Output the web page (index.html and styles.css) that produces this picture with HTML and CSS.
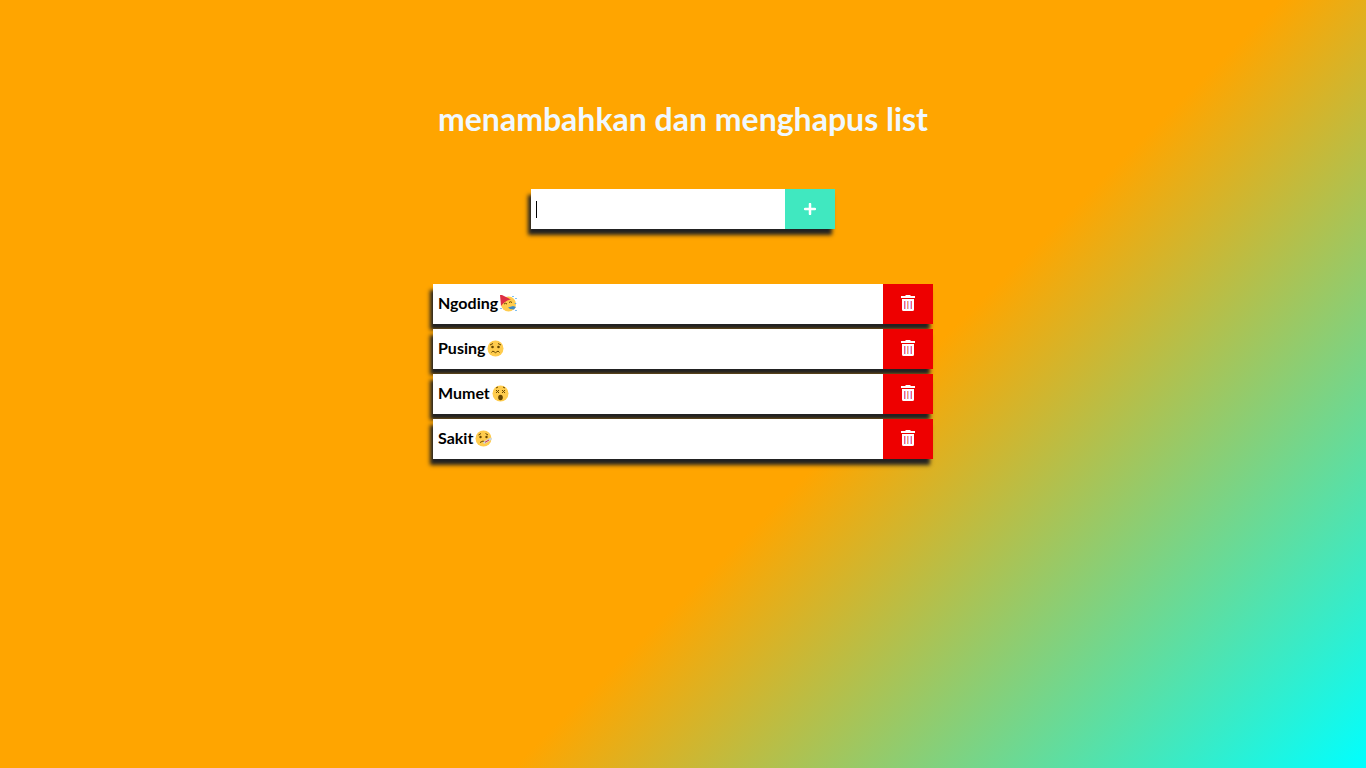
FILE: index.html
```
<!DOCTYPE html>
<html lang="id">
<head>
<meta charset="utf-8">
<meta name="viewport" content="width=device-width, initial-scale=1">
<title>menambahkan dan menghapus list</title>
<link rel="stylesheet" href="styles.css">
</head>
<body>
<svg class="sprite" aria-hidden="true">
  <symbol id="trash" viewBox="0 0 14 16">
    <path fill="#fff" d="M4 1 5 0h4l1 1h4v2H0V1zM1 4h12v10.500a1.500 1.500 0 0 1-1.500 1.500h-9A1.500 1.500 0 0 1 1 14.500z"/>
    <path fill="#f4607c" d="M3 6h1v8H3zM10 6h1v8h-1z"/>
    <path fill="#f8a060" d="M6 6h1v8H6z"/>
    <path fill="#c070e0" d="M7 6h1v8H7zM4 6h1v8H4zM9 6h1v8H9z" opacity=".5"/>
  </symbol>
</svg>
<main class="app">
  <h1 class="title">menambahkan dan menghapus list</h1>
  <form class="entry">
    <input class="entry-input" type="text" aria-label="Tambah list" autocomplete="off" autofocus>
    <button class="button add" type="button" aria-label="Tambah">
      <svg width="12" height="12" viewBox="0 0 12 12"><path d="M6 1v10M1 6h10" stroke="#fff" stroke-width="2.500" stroke-linecap="round"/></svg>
    </button>
  </form>
  <ul class="list">
    <li class="item">
      <span class="label">Ngoding
        <svg class="emoji" viewBox="0 0 17 17" role="img" aria-label="🥳">
          <circle cx="8.500" cy="9" r="7.500" fill="#ffcc4d"/>
          <path d="M0 0h2l9 4.500Q5 5.500 1 11z" fill="#dd2e44"/>
          <path d="M4 9q1.500-1.500 3 0M9 7.500q1.500-1.500 3 0" fill="none" stroke="#664500"/>
          <path d="m8 12.500 5-1.500 3 1-2 2.500-4-.500z" fill="#4289c1"/>
          <path d="M13 1v1M16 3v1M15.500 8v1M1 13v1M16 15v1" stroke="#55acee" stroke-width="1.500"/>
        </svg>
      </span>
      <button class="button remove" type="button" aria-label="Hapus Ngoding"><svg width="14" height="16"><use href="#trash"/></svg></button>
    </li>
    <li class="item">
      <span class="label">Pusing
        <svg class="emoji" viewBox="0 0 17 17" role="img" aria-label="🥴">
          <circle cx="8.500" cy="8.500" r="8" fill="#ffcc4d"/>
          <path d="M3 5 6 3.500M11 3.500 14 5M4.500 12.500q1.300-2.500 2.700-.700t2.600 0 2.700.700" fill="none" stroke="#664500"/>
          <circle cx="5.500" cy="7" r="1.300" fill="#664500"/><circle cx="11.500" cy="7" r="1.300" fill="#664500"/>
        </svg>
      </span>
      <button class="button remove" type="button" aria-label="Hapus Pusing"><svg width="14" height="16"><use href="#trash"/></svg></button>
    </li>
    <li class="item">
      <span class="label">Mumet
        <svg class="emoji" viewBox="0 0 17 17" role="img" aria-label="😵">
          <circle cx="8.500" cy="8.500" r="8" fill="#ffcc4d"/>
          <path d="m4 5 3 3M7 5 4 8M10 5l3 3M13 5l-3 3M4 3l2-1M11 2l2 1" stroke="#664500"/>
          <ellipse cx="8.500" cy="12.500" rx="2.300" ry="2.700" fill="#664500"/>
        </svg>
      </span>
      <button class="button remove" type="button" aria-label="Hapus Mumet"><svg width="14" height="16"><use href="#trash"/></svg></button>
    </li>
    <li class="item">
      <span class="label">Sakit
        <svg class="emoji" viewBox="0 0 17 17" role="img" aria-label="🤒">
          <circle cx="8.500" cy="8.500" r="8" fill="#ffcc4d"/>
          <path d="M3.500 5 6 3.500M10.500 3.500 13 5M5 12.500q3-3 6 0" fill="none" stroke="#664500"/>
          <circle cx="5.500" cy="7" r="1.200" fill="#664500"/><circle cx="11.500" cy="7" r="1.200" fill="#664500"/>
          <path d="m9.500 12.500 6-3.500" stroke="#ccd6dd" stroke-width="2.500" stroke-linecap="round"/>
          <path d="m10 12.300 4-2.300" stroke="#dd2e44"/>
        </svg>
      </span>
      <button class="button remove" type="button" aria-label="Hapus Sakit"><svg width="14" height="16"><use href="#trash"/></svg></button>
    </li>
  </ul>
</main>
</body>
</html>
```
FILE: styles.css
```
* {
  box-sizing: border-box;
  margin: 0;
  padding: 0;
}

body {
  min-height: 100vh;
  background: linear-gradient(135deg, orange 60%, aqua);
  font-family: Lato, "Noto Sans", sans-serif;
}

.sprite {
  position: absolute;
  width: 0;
  height: 0;
}

.app {
  display: flex;
  flex-direction: column;
  align-items: center;
  padding: 99px 16px 48px;
}

.title {
  color: aliceblue;
  font-size: 32px;
  font-weight: 700;
  line-height: 40px;
  text-align: center;
}

.entry {
  display: flex;
  width: 100%;
  max-width: 304px;
  margin-top: 50px;
  box-shadow: -3px 6px 4px #222;
}

.entry-input {
  flex: 1;
  min-width: 0;
  height: 40px;
  padding: 0 5px;
  border: 0;
  outline: 0;
  background: #fff linear-gradient(#000, #000) 5px 12px / 1px 17px no-repeat;
  caret-color: transparent;
  font: 700 16px/20px Lato, "Noto Sans", sans-serif;
}

.button {
  display: flex;
  flex: none;
  align-items: center;
  justify-content: center;
  width: 50px;
  height: 40px;
  border: 0;
  cursor: pointer;
}

.add {
  background: #40e8c0;
}

.remove {
  padding-bottom: 2px;
  background: #ee0000;
}

.list {
  display: flex;
  flex-direction: column;
  gap: 5px;
  width: 100%;
  max-width: 500px;
  margin-top: 55px;
  list-style: none;
}

.item {
  display: flex;
  align-items: center;
  background: #fff;
  box-shadow: -3px 6px 4px #222;
}

.label {
  display: flex;
  flex: 1;
  align-items: center;
  gap: 2px;
  padding: 0 5px 2px;
  font-size: 16px;
  font-weight: 700;
  line-height: 20px;
}

.emoji {
  width: 17px;
  height: 17px;
}
```
